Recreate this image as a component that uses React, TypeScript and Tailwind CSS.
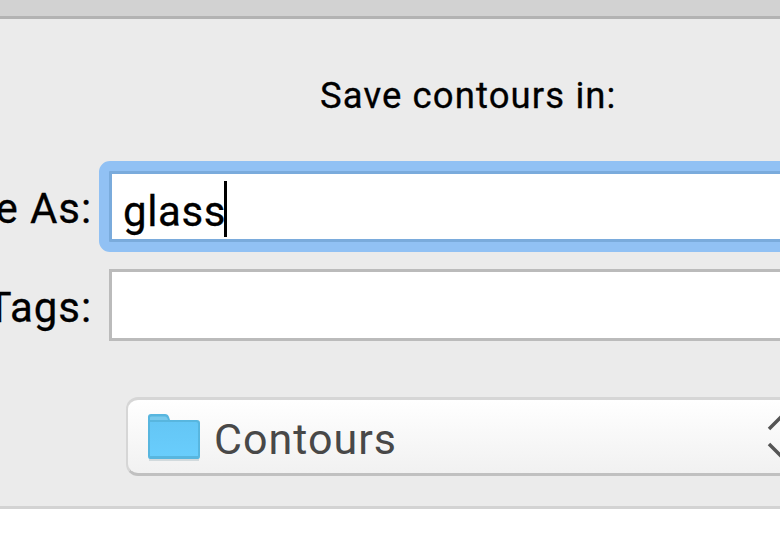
import type { ReactNode } from "react";

function FolderIcon() {
  return (
    <svg width="54" height="50" viewBox="0 0 54 50" className="block shrink-0" aria-hidden="true">
      <defs>
        <linearGradient id="folder-front" x1="0" y1="0" x2="0" y2="1">
          <stop offset="0" stopColor="#64c6f5" />
          <stop offset="1" stopColor="#69cdfc" />
        </linearGradient>
      </defs>
      <path d="M2 48h50" stroke="#d2dadd" strokeWidth="2" />
      <path d="M1 5q0-3 3-3h14q3 0 4 3l1 3H50q3 0 3 3v33q0 3-2 3H3q-2 0-2-3z" fill="#58b6df" />
      <path d="M3 5.500q0-1 1.500-1H18q2 0 3 3.500H3z" fill="#79c9ec" />
      <path d="M3 10h46q2 0 2 2v32H3z" fill="url(#folder-front)" />
    </svg>
  );
}

function FormRow({ label, children }: { label: string; children: ReactNode }) {
  return (
    <div className="flex w-full items-center">
      <div className="flex w-[92px] shrink-0 justify-end pt-[5px] text-[42px] leading-none tracking-[0.9px] whitespace-nowrap text-black [-webkit-text-stroke:0.3px_#000]">
        <span>{label}</span>
      </div>
      {children}
    </div>
  );
}

export default function App() {
  return (
    <div className="flex h-[535px] w-[780px] flex-col overflow-hidden bg-white font-['Roboto','Liberation_Sans',sans-serif]">
      <div className="h-[16px] shrink-0 bg-[#d2d2d2]" />
      <main className="flex h-[493px] shrink-0 flex-col border-t-[3px] border-b-[3px] border-t-[#b3b3b3] border-b-[#d3d3d3] bg-[#ebebeb]">
        <h1 className="mt-[57px] pl-[320px] text-[36.5px] leading-[40px] font-normal tracking-[1.1px] whitespace-nowrap text-black [-webkit-text-stroke:0.3px_#000]">
          Save contours in:
        </h1>

        <div className="mt-[55px] flex flex-col gap-[27px]">
          <FormRow label="Save As:">
            <div className="w-[720px] ml-[17px] shrink-0 rounded-[1px] outline-[10px] outline-[#91c1f4]">
              <div className="flex h-[71px] items-center border-[3px] border-[#7aabdc] bg-white pl-[11px]">
                <span className="pt-[11px] text-[42px] leading-none tracking-[0.6px] text-black [-webkit-text-stroke:0.3px_#000]">glass</span>
                <span className="mt-[4px] -ml-[2px] h-[56px] w-[3px] bg-black" />
              </div>
            </div>
          </FormRow>
          <FormRow label="Tags:">
            <div className="ml-[17px] h-[72px] w-[720px] shrink-0 border-[3px] border-[#bbbbbb] bg-white" />
          </FormRow>
        </div>

        <button
          type="button"
          className="mt-[56px] ml-[126px] flex h-[79px] w-[720px] shrink-0 items-center rounded-[12px] border-[2px] border-t-[3px] border-b-[3px] border-[#d6d6d6] border-b-[#c0c0c0] bg-linear-to-b from-white to-[#f1f1f1] pl-[19px] text-left"
        >
          <FolderIcon />
          <span className="ml-[13px] w-[553px] shrink-0 pt-[5px] text-[43px] leading-none tracking-[1px] text-[#484848]">Contours</span>
          <svg width="32" height="48" viewBox="0 0 32 48" fill="none" stroke="#555" strokeWidth="3.500" className="shrink-0" aria-hidden="true">
            <path d="M2 16 16 2l14 14M2 31l14 14 14-14" />
          </svg>
        </button>
      </main>
    </div>
  );
}
